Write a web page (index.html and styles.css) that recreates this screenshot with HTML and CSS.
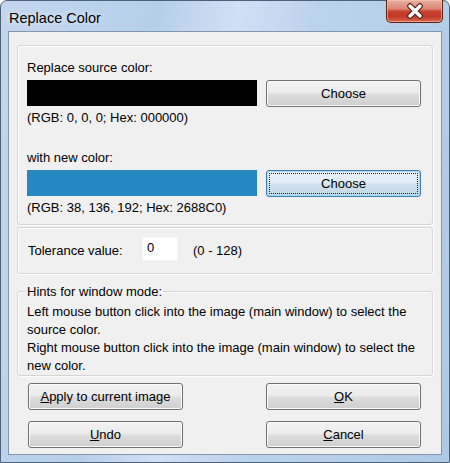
FILE: index.html
```html
<!DOCTYPE html>
<html>
<head>
<meta charset="utf-8">
<title>Replace Color</title>
<link rel="stylesheet" href="styles.css">
</head>
<body>
<div class="window">
  <div class="titlebar">
    <span class="title">Replace Color</span>
    <div class="close">
      <svg width="24" height="16" viewBox="0 0 24 16">
        <path d="M7 3 L17 13 M17 3 L7 13" stroke="#4a1c14" stroke-width="5.5" stroke-linecap="round"/>
        <path d="M7 3 L17 13 M17 3 L7 13" stroke="#ffffff" stroke-width="3.5" stroke-linecap="round"/>
      </svg>
    </div>
  </div>
  <div class="client">
    <div class="group colors">
      <div class="label">Replace source color:</div>
      <div class="pick-row">
        <div class="swatch swatch-black"></div>
        <button class="btn">Choose</button>
      </div>
      <div class="info">(RGB: 0, 0, 0; Hex: 000000)</div>
      <div class="label second">with new color:</div>
      <div class="pick-row">
        <div class="swatch swatch-blue"></div>
        <button class="btn btn-focus"><span class="focus-text">Choose</span></button>
      </div>
      <div class="info">(RGB: 38, 136, 192; Hex: 2688C0)</div>
    </div>
    <div class="group tolerance">
      <span class="tol-label">Tolerance value:</span>
      <div class="input">0</div>
      <span class="range">(0 - 128)</span>
    </div>
    <fieldset class="hints">
      <legend>Hints for window mode:</legend>
      <p>Left mouse button click into the image (main window) to select the<br>source color.</p>
      <p>Right mouse button click into the image (main window) to select the<br>new color.</p>
    </fieldset>
    <div class="actions">
      <button class="btn"><u>A</u>pply to current image</button>
      <button class="btn"><u>O</u>K</button>
      <button class="btn"><u>U</u>ndo</button>
      <button class="btn"><u>C</u>ancel</button>
    </div>
  </div>
</div>
</body>
</html>
```

FILE: styles.css
```css
html, body {
  margin: 0;
  padding: 0;
  background: #ffffff;
}

.window {
  width: 450px;
  height: 463px;
  box-sizing: border-box;
  background: linear-gradient(100deg, #c2d7ee 0%, #b6cfe9 30%, #cfe1f3 45%, #bcd3ec 60%, #aec9e6 100%);
  border: 1px solid #4d6178;
  border-radius: 7px 7px 0 0;
  display: flex;
  flex-direction: column;
  font-family: "Liberation Sans", Arial, sans-serif;
  font-size: 13px;
  color: #000;
}

.titlebar {
  height: 30px;
  display: flex;
  justify-content: space-between;
  align-items: flex-start;
  padding: 0 6px 0 8px;
}

.title {
  font-size: 14.5px;
  line-height: 15px;
  margin-top: 10px;
  color: #000;
  text-shadow: 0 0 6px rgba(255,255,255,0.9);
}

.close {
  width: 57px;
  height: 23px;
  box-sizing: border-box;
  margin-top: -1px;
  border: 1px solid #5a2219;
  border-top: none;
  border-radius: 0 0 5px 5px;
  background: linear-gradient(#eab0a2 0%, #dc8574 40%, #c7412e 52%, #c23a26 75%, #d66a4e 100%);
  box-shadow: inset 0 0 0 1px rgba(255,200,190,0.55);
  display: flex;
  align-items: center;
  justify-content: center;
}

.client {
  flex: 1;
  margin: 0 7px 7px 7px;
  background: #f0f0f0;
  border: 1px solid #8396ab;
  display: flex;
  flex-direction: column;
  padding: 13px 8px 0 8px;
}

.group {
  border: 1px solid #d5d5d5;
  border-radius: 3px;
  box-shadow: inset 1px 1px 0 #ffffff, 1px 1px 0 #ffffff;
  box-sizing: border-box;
}

.colors {
  height: 180px;
  padding: 14px 11px 0 9px;
  display: flex;
  flex-direction: column;
}

.label {
  line-height: 15px;
  height: 15px;
}

.label.second {
  margin-top: 25px;
}

.pick-row {
  margin-top: 5px;
  display: flex;
  align-items: flex-start;
  gap: 9px;
  height: 27px;
}

.swatch {
  width: 230px;
  height: 26px;
}

.swatch-black {
  background: #000000;
}

.swatch-blue {
  background: #2688c0;
}

.info {
  margin-top: 3px;
  line-height: 15px;
  height: 15px;
}

.btn {
  width: 155px;
  height: 27px;
  box-sizing: border-box;
  border: 1px solid #707070;
  border-radius: 3px;
  background: linear-gradient(#f2f2f2 0%, #ebebeb 48%, #dddddd 52%, #cfcfcf 100%);
  box-shadow: inset 0 0 0 1px #fbfbfb;
  font-family: "Liberation Sans", Arial, sans-serif;
  font-size: 13px;
  color: #000;
  padding: 0;
  margin: 0;
}

.btn-focus {
  border-color: #3c7fb1;
  background: linear-gradient(#ebf3f8 0%, #dfecf4 48%, #cfe1ec 52%, #c2d8e5 100%);
  box-shadow: inset 0 0 0 1px #a9d8f0;
  position: relative;
}

.btn-focus::after {
  content: "";
  position: absolute;
  left: 2px;
  top: 2px;
  right: 2px;
  bottom: 2px;
  border: 1px dotted #222;
  border-radius: 1px;
}

.tolerance {
  margin-top: 2px;
  height: 47px;
  display: flex;
  align-items: center;
  padding-left: 10px;
}

.tol-label {
  width: 114px;
}

.input {
  width: 36px;
  height: 24px;
  box-sizing: border-box;
  background: #ffffff;
  border: 1px solid #f4f4f4;
  padding: 2px 0 0 4px;
  line-height: 15px;
  margin-top: -3px;
}

.range {
  margin-left: 15px;
}

.hints {
  margin: 10px 0 0 0;
  padding: 4px 9px 0 9px;
  height: 92px;
  box-sizing: border-box;
  border: 1px solid #d5d5d5;
  border-radius: 3px;
  box-shadow: inset 1px 1px 0 #ffffff, 1px 1px 0 #ffffff;
  min-width: 0;
}

.hints legend {
  padding: 0 1px;
  line-height: 15px;
  margin-left: -1px;
}

.hints p {
  margin: 0;
  line-height: 18px;
  white-space: nowrap;
}

.actions {
  margin-top: 7px;
  padding-left: 11px;
  display: grid;
  grid-template-columns: 155px 155px;
  column-gap: 83px;
  row-gap: 11px;
}
```
